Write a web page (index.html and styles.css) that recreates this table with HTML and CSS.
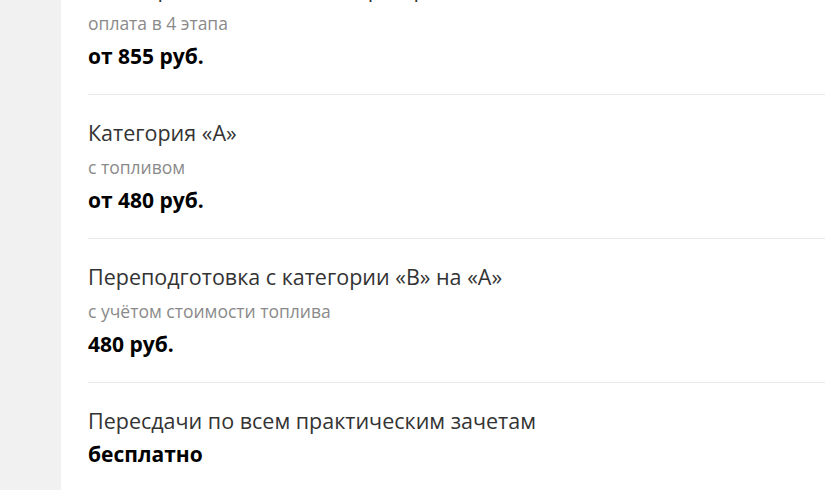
FILE: index.html
```html
<!DOCTYPE html>
<html lang="ru">
<head>
<meta charset="utf-8">
<link rel="stylesheet" href="styles.css">
</head>
<body>
<div class="page">
  <aside class="side"></aside>
  <main class="content">
    <ul class="prices">
      <li class="item">
        <div class="title">Категория «В» (механика), рассрочка</div>
        <div class="note">оплата в 4 этапа</div>
        <div class="price">от 855 руб.</div>
      </li>
      <li class="item">
        <div class="title">Категория «А»</div>
        <div class="note">с топливом</div>
        <div class="price">от 480 руб.</div>
      </li>
      <li class="item">
        <div class="title">Переподготовка с категории «В» на «А»</div>
        <div class="note">с учётом стоимости топлива</div>
        <div class="price">480 руб.</div>
      </li>
      <li class="item">
        <div class="title">Пересдачи по всем практическим зачетам</div>
        <div class="price">бесплатно</div>
      </li>
    </ul>
  </main>
</div>
</body>
</html>
```

FILE: styles.css
```css
html, body {
  margin: 0;
  padding: 0;
  height: 100%;
  overflow: hidden;
}
body {
  background: #f1f1f1;
  font-family: "Open Sans", "Noto Sans", sans-serif;
}
.page {
  display: flex;
  height: 100%;
}
.side {
  width: 61px;
  flex: 0 0 61px;
  background: #f1f1f1;
}
.content {
  flex: 1;
  background: #fff;
  padding-left: 27px;
}
.prices {
  list-style: none;
  margin: -49px 0 0 0;
  padding: 0;
}
.item {
  padding: 21px 0;
  border-bottom: 1px solid #e9e9e9;
}
.title {
  font-size: 21.5px;
  line-height: 34px;
  color: #333;
}
.note {
  font-size: 17.5px;
  line-height: 34px;
  color: #8a8a8a;
}
.price {
  font-size: 21px;
  line-height: 33px;
  font-weight: 700;
  color: #000;
}
```
